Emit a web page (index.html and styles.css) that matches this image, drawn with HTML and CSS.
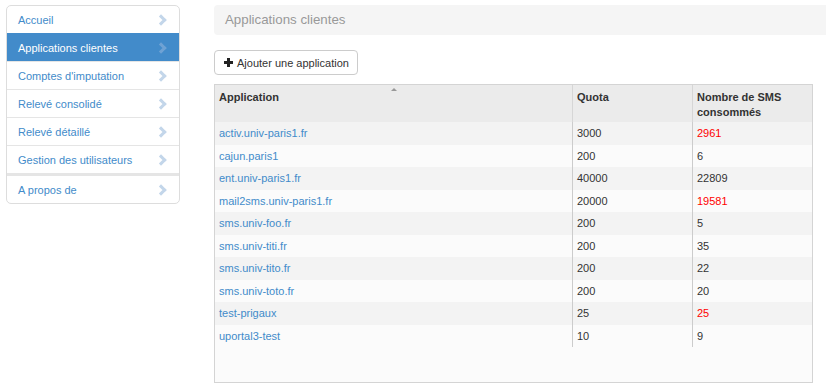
FILE: index.html
```html
<!DOCTYPE html>
<html lang="fr">
<head>
    <meta charset="UTF-8">
    <title>Applications clientes</title>
    <link rel="stylesheet" href="styles.css">
</head>
<body>
    <div class="layout">
        <ul class="nav-list">
            <li><a href="#">Accueil</a></li>
            <li class="active"><a href="#">Applications clientes</a></li>
            <li><a href="#">Comptes d'imputation</a></li>
            <li><a href="#">Relevé consolidé</a></li>
            <li><a href="#">Relevé détaillé</a></li>
            <li><a href="#">Gestion des utilisateurs</a></li>
            <li class="divided"><a href="#">A propos de</a></li>
        </ul>

        <div class="main">
            <div class="page-title">Applications clientes</div>

            <button class="btn"><span class="plus"></span>Ajouter une application</button>

            <div class="grid">
                <table>
                    <thead>
                        <tr>
                            <th class="col-app sorted">Application</th>
                            <th class="col-quota">Quota</th>
                            <th class="col-sms">Nombre de SMS consommés</th>
                        </tr>
                    </thead>
                    <tbody>
                        <tr><td><a href="#">activ.univ-paris1.fr</a></td><td>3000</td><td class="over">2961</td></tr>
                        <tr><td><a href="#">cajun.paris1</a></td><td>200</td><td>6</td></tr>
                        <tr><td><a href="#">ent.univ-paris1.fr</a></td><td>40000</td><td>22809</td></tr>
                        <tr><td><a href="#">mail2sms.univ-paris1.fr</a></td><td>20000</td><td class="over">19581</td></tr>
                        <tr><td><a href="#">sms.univ-foo.fr</a></td><td>200</td><td>5</td></tr>
                        <tr><td><a href="#">sms.univ-titi.fr</a></td><td>200</td><td>35</td></tr>
                        <tr><td><a href="#">sms.univ-tito.fr</a></td><td>200</td><td>22</td></tr>
                        <tr><td><a href="#">sms.univ-toto.fr</a></td><td>200</td><td>20</td></tr>
                        <tr><td><a href="#">test-prigaux</a></td><td>25</td><td class="over">25</td></tr>
                        <tr><td><a href="#">uportal3-test</a></td><td>10</td><td>9</td></tr>
                    </tbody>
                </table>
            </div>
        </div>
    </div>
</body>
</html>
```

FILE: styles.css
```css
body {
    margin: 0;
    font-family: 'Liberation Sans', Arial, sans-serif;
    font-size: 11px;
    color: #333;
    background: #fff;
}
a {
    color: #428bca;
    text-decoration: none;
}
.layout {
    display: flex;
    align-items: flex-start;
    padding: 5px 0 0 6px;
    gap: 34px;
}

/* sidebar */
.nav-list {
    list-style: none;
    margin: 0;
    padding: 0;
    width: 172px;
    border: 1px solid #ddd;
    border-radius: 5px;
    overflow: hidden;
}
.nav-list li {
    border-top: 1px solid #e5e5e5;
}
.nav-list li:first-child {
    border-top: none;
}
.nav-list li.divided {
    border-top: 3px solid #e5e5e5;
}
.nav-list a {
    display: flex;
    justify-content: space-between;
    align-items: center;
    padding: 5px 10px 4px 11px;
    line-height: 18px;
}
.nav-list a::after {
    content: '';
    width: 5px;
    height: 5px;
    border-top: 3px solid #c3d6ea;
    border-right: 3px solid #c3d6ea;
    transform: rotate(45deg);
    margin-right: 4px;
}
.nav-list li.active {
    background: #428bca;
    border-top-color: #428bca;
}
.nav-list li.active a {
    color: #fff;
}
.nav-list li.active a::after {
    border-color: #6fa2d4;
}
.nav-list li.active + li {
    border-top-color: #e5e5e5;
}

/* main */
.main {
    flex: 1;
}
.page-title {
    background: #f5f5f5;
    border-radius: 4px 0 0 4px;
    color: #999;
    font-size: 13.3px;
    line-height: 30px;
    padding: 0 11px;
    margin-bottom: 15px;
}
.btn {
    display: inline-flex;
    align-items: center;
    font-family: inherit;
    font-size: 11px;
    color: #333;
    background: #fff;
    border: 1px solid #ccc;
    border-radius: 4px;
    height: 25px;
    padding: 0 8px 0 9px;
    margin-bottom: 9px;
    cursor: pointer;
}
.plus {
    position: relative;
    width: 9px;
    height: 9px;
    margin-right: 4px;
}
.plus::before,
.plus::after {
    content: '';
    position: absolute;
    background: #222;
}
.plus::before {
    left: 3px;
    top: 0;
    width: 3px;
    height: 9px;
}
.plus::after {
    left: 0;
    top: 3px;
    width: 9px;
    height: 3px;
}

.grid {
    width: 597px;
    height: 297px;
    border: 1px solid #d4d4d4;
    background: #fbfbfb;
}
table {
    width: 100%;
    border-collapse: collapse;
}
th {
    background: #ebebeb;
    text-align: left;
    vertical-align: top;
    font-weight: bold;
    line-height: 15px;
    padding: 5px 4px 2px;
}
th + th {
    border-left: 1px solid #d6d6d6;
}
th.sorted {
    position: relative;
}
th.sorted::after {
    content: '';
    position: absolute;
    left: 176px;
    top: 3px;
    border-left: 3px solid transparent;
    border-right: 3px solid transparent;
    border-bottom: 3px solid #999;
}
.col-app { width: 349px; }
.col-quota { width: 111px; }
td {
    line-height: 14.5px;
    padding: 4px 4px;
}
td + td {
    border-left: 1px solid #ccc;
}
tbody tr:nth-child(odd) {
    background: #f3f3f3;
}
tbody tr:nth-child(even) {
    background: #fbfbfb;
}
td.over {
    color: #f00;
}
```
